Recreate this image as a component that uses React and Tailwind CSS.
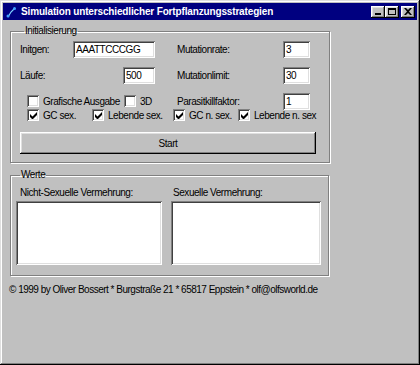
const raised = 'shadow-[inset_-1px_-1px_#000,inset_1px_1px_#fff,inset_-2px_-2px_#808080,inset_2px_2px_#dfdfdf]'
const sunken = 'shadow-[inset_1px_1px_#808080,inset_-1px_-1px_#fff,inset_2px_2px_#404040,inset_-2px_-2px_#dfdfdf]'

function TitleButton({ children, className = '' }) {
  return (
    <div className={`w-[14px] h-[12px] bg-[#c0c0c0] flex items-center justify-center ${raised} ${className}`}>
      {children}
    </div>
  )
}

function Field({ value, className = '' }) {
  return (
    <div className={`h-[17px] bg-white px-[3px] flex items-center text-black ${sunken} ${className}`}>
      {value}
    </div>
  )
}

function Check({ label, checked, width }) {
  return (
    <div className="flex items-center shrink-0 overflow-hidden whitespace-nowrap" style={{ width }}>
      <div className={`w-[12px] h-[12px] shrink-0 bg-white flex items-center justify-center ${sunken}`}>
        {checked && (
          <svg width="7" height="7" viewBox="0 0 7 7">
            <path d="M0 2v3l2 2h1l4-4V0L2.5 4.5z" fill="#000" />
          </svg>
        )}
      </div>
      <span className="ml-[4px]">{label}</span>
    </div>
  )
}

function Group({ title, className = '', children }) {
  return (
    <fieldset className={`border border-[#808080] shadow-[1px_1px_0_#fff,inset_1px_1px_0_#fff] ${className}`}>
      <legend className="ml-[4px] px-px leading-[12px]">{title}</legend>
      {children}
    </fieldset>
  )
}

export default function App() {
  return (
    <div
      className="w-[420px] h-[365px] bg-[#c0c0c0] text-[10px] tracking-[-0.45px] text-black p-[3px] shadow-[inset_-1px_-1px_#000,inset_1px_1px_#dfdfdf,inset_-2px_-2px_#808080,inset_2px_2px_#fff] flex flex-col"
      style={{ fontFamily: '"Liberation Sans", Arial, sans-serif' }}
    >
      {/* Title bar */}
      <div className="h-[17px] bg-[#000080] flex items-center pl-[2px] pr-[2px]">
        <svg width="12" height="12" viewBox="0 0 12 12" className="mr-[4px]">
          <path d="M3 11 L6 6 L9 3" stroke="#7fd0ff" strokeWidth="1.2" fill="none" />
          <circle cx="3" cy="10" r="1.5" fill="#40a0ff" />
          <circle cx="9.5" cy="2.5" r="1.5" fill="#40a0ff" />
        </svg>
        <span className="text-white font-bold text-[10px] tracking-[-0.15px]">
          Simulation unterschiedlicher Fortpflanzungsstrategien
        </span>
        <div className="ml-auto flex items-center">
          <TitleButton>
            <div className="w-[6px] h-[2px] bg-black mt-[5px] -ml-[1px]" />
          </TitleButton>
          <TitleButton>
            <div className="w-[8px] h-[7px] border border-black border-t-2 -ml-[1px]" />
          </TitleButton>
          <TitleButton className="ml-[2px]">
            <svg width="8" height="7" viewBox="0 0 8 7" className="-ml-[1px]">
              <path d="M0 0h2l2 2 2-2h2L5 3.5 8 7H6L4 5 2 7H0l3-3.5z" fill="#000" />
            </svg>
          </TitleButton>
        </div>
      </div>

      <div className="pl-[7px] pr-[88px] pt-[5px]">
        <Group title="Initialisierung" className="h-[138px] pl-[9px] pr-[11px]">
          <div className="flex items-center h-[17px] mt-[4px]">
            <span className="w-[53px]">Initgen:</span>
            <Field value="AAATTCCCGG" className="w-[82px]" />
            <span className="ml-[22px] w-[106px]">Mutationrate:</span>
            <Field value="3" className="w-[27px]" />
          </div>
          <div className="flex items-center h-[17px] mt-[9px]">
            <span className="w-[103px]">Läufe:</span>
            <Field value="500" className="w-[32px]" />
            <span className="ml-[22px] w-[106px]">Mutationlimit:</span>
            <Field value="30" className="w-[27px]" />
          </div>
          <div className="flex items-center h-[16px] mt-[9px] pl-[7px]">
            <Check label="Grafische Ausgabe" width="97px" />
            <Check label="3D" width="53px" />
            <span className="w-[106px]">Parasitkillfaktor:</span>
            <Field value="1" className="w-[27px] h-[16px]" />
          </div>
          <div className="flex items-center h-[14px] -mt-[1px] pl-[7px]">
            <Check label="GC sex." checked width="65px" />
            <Check label="Lebende sex." checked width="81px" />
            <Check label="GC n. sex." checked width="65px" />
            <Check label="Lebende n. sex" checked width="80px" />
          </div>
          <button className={`w-[296px] h-[22px] mt-[10px] bg-[#c0c0c0] ${raised}`}>Start</button>
        </Group>

        <Group title="Werte" className="h-[107px] mt-[6px] pl-[5px]">
          <div className="flex mt-[4px]">
            <span className="w-[157px] pl-[4px]">Nicht-Sexuelle Vermehrung:</span>
            <span>Sexuelle Vermehrung:</span>
          </div>
          <div className="flex mt-[1px] gap-[9px]">
            <div className={`w-[146px] h-[64px] bg-white ${sunken}`} />
            <div className={`w-[150px] h-[64px] bg-white ${sunken}`} />
          </div>
        </Group>

        <p className="mt-[6px] -ml-px whitespace-nowrap tracking-[-0.5px]">
          © 1999 by Oliver Bossert * Burgstraße 21 * 65817 Eppstein * olf@olfsworld.de
        </p>
      </div>
    </div>
  )
}
